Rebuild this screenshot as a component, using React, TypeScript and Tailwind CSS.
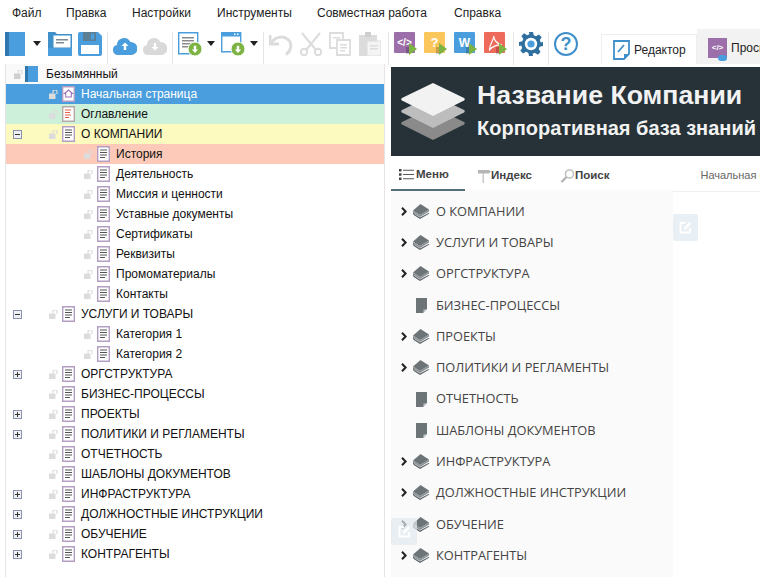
import type { ReactNode } from 'react'

const MENU: { label: string; width: string }[] = [
  { label: 'Файл', width: 'w-[54px]' },
  { label: 'Правка', width: 'w-[66px]' },
  { label: 'Настройки', width: 'w-[85px]' },
  { label: 'Инструменты', width: 'w-[100px]' },
  { label: 'Совместная работа', width: 'w-[137px]' },
  { label: 'Справка', width: 'w-[60px]' },
]

type TreeRow = {
  label: string
  level: 0 | 1 | 2
  toggle?: 'plus' | 'minus'
  icon?: 'book' | 'home' | 'toc' | 'doc'
  bg?: string
}

const TREE: TreeRow[] = [
  { label: 'Безымянный', level: 0, icon: 'book', bg: 'bg-[#f9f9f9]' },
  { label: 'Начальная страница', level: 1, icon: 'home', bg: 'bg-[#4a9edd] text-white' },
  { label: 'Оглавление', level: 1, icon: 'toc', bg: 'bg-[#cdf0da]' },
  { label: 'О КОМПАНИИ', level: 1, toggle: 'minus', bg: 'bg-[#fdfabf]' },
  { label: 'История', level: 2, bg: 'bg-[#fdc9b8]' },
  { label: 'Деятельность', level: 2 },
  { label: 'Миссия и ценности', level: 2 },
  { label: 'Уставные документы', level: 2 },
  { label: 'Сертификаты', level: 2 },
  { label: 'Реквизиты', level: 2 },
  { label: 'Промоматериалы', level: 2 },
  { label: 'Контакты', level: 2 },
  { label: 'УСЛУГИ И ТОВАРЫ', level: 1, toggle: 'minus' },
  { label: 'Категория 1', level: 2 },
  { label: 'Категория 2', level: 2 },
  { label: 'ОРГСТРУКТУРА', level: 1, toggle: 'plus' },
  { label: 'БИЗНЕС-ПРОЦЕССЫ', level: 1 },
  { label: 'ПРОЕКТЫ', level: 1, toggle: 'plus' },
  { label: 'ПОЛИТИКИ И РЕГЛАМЕНТЫ', level: 1, toggle: 'plus' },
  { label: 'ОТЧЕТНОСТЬ', level: 1 },
  { label: 'ШАБЛОНЫ ДОКУМЕНТОВ', level: 1 },
  { label: 'ИНФРАСТРУКТУРА', level: 1, toggle: 'plus' },
  { label: 'ДОЛЖНОСТНЫЕ ИНСТРУКЦИИ', level: 1, toggle: 'plus' },
  { label: 'ОБУЧЕНИЕ', level: 1, toggle: 'plus' },
  { label: 'КОНТРАГЕНТЫ', level: 1, toggle: 'plus' },
]

const SIDE_MENU: { label: string; folder: boolean }[] = [
  { label: 'О КОМПАНИИ', folder: true },
  { label: 'УСЛУГИ И ТОВАРЫ', folder: true },
  { label: 'ОРГСТРУКТУРА', folder: true },
  { label: 'БИЗНЕС-ПРОЦЕССЫ', folder: false },
  { label: 'ПРОЕКТЫ', folder: true },
  { label: 'ПОЛИТИКИ И РЕГЛАМЕНТЫ', folder: true },
  { label: 'ОТЧЕТНОСТЬ', folder: false },
  { label: 'ШАБЛОНЫ ДОКУМЕНТОВ', folder: false },
  { label: 'ИНФРАСТРУКТУРА', folder: true },
  { label: 'ДОЛЖНОСТНЫЕ ИНСТРУКЦИИ', folder: true },
  { label: 'ОБУЧЕНИЕ', folder: true },
  { label: 'КОНТРАГЕНТЫ', folder: true },
]

function Caret({ className = '' }: { className?: string }) {
  return (
    <svg width="8" height="5" viewBox="0 0 8 5" className={`shrink-0 ${className}`}>
      <path d="M0 0h8L4 5z" fill="#222" />
    </svg>
  )
}

function Sep({ className = '' }: { className?: string }) {
  return <div className={`h-[33px] w-px shrink-0 bg-[#e6e6e6] ${className}`} />
}

function BookIcon() {
  return (
    <svg width="20" height="24" viewBox="0 0 20 24" className="shrink-0">
      <rect width="20" height="24" fill="#4a9edd" />
      <rect width="4" height="24" fill="#2f78ad" />
    </svg>
  )
}

function FolderOpenIcon() {
  return (
    <svg width="24" height="24" viewBox="0 0 24 24" className="shrink-0">
      <path d="M0 0h7l2 2h15v22H0z" fill="#3f8fca" />
      <rect x="5" y="3" width="18" height="13" fill="#fff" stroke="#3f8fca" />
      <path d="M8 7h12v1.4H8zM8 10h8v1.4H8z" fill="#7d8a94" />
      <path d="M0 16h24v8H0z" fill="#4a9edd" />
    </svg>
  )
}

function SaveIcon() {
  return (
    <svg width="24" height="24" viewBox="0 0 24 24" className="shrink-0">
      <path d="M2 0h18l4 4v18a2 2 0 0 1-2 2H2a2 2 0 0 1-2-2V2a2 2 0 0 1 2-2z" fill="#4a9edd" />
      <rect x="5" y="0" width="13" height="9" fill="#5d7f96" />
      <rect x="13" y="1.5" width="3" height="6" fill="#4a9edd" />
      <rect x="3" y="13" width="18" height="9" fill="#fff" />
    </svg>
  )
}

function CloudIcon({ color, arrow }: { color: string; arrow: 'up' | 'down' }) {
  return (
    <svg width="24" height="19" viewBox="0 0 24 19" className="mt-[4px] shrink-0">
      <path d="M5 19a5 5 0 0 1-1-9.9A7 7 0 0 1 17.3 6 6.5 6.5 0 0 1 18.5 19z" fill={color} />
      {arrow === 'up' ? (
        <path d="M12 6.5l3.5 3.6h-2.3V14h-2.4v-3.9H8.5z" fill="#fff" />
      ) : (
        <path d="M12 14.5l3.5-3.6h-2.3V7h-2.4v3.9H8.5z" fill="#fff" />
      )}
    </svg>
  )
}

function GreenBadge({ x, y }: { x: number; y: number }) {
  return (
    <g transform={`translate(${x} ${y})`}>
      <circle cx="7" cy="7" r="7" fill="#7cb342" stroke="#fff" strokeWidth="1" />
      <path d="M7 11l3.2-3.4H8.2V3.8H5.8v3.8H3.8z" fill="#fff" />
    </g>
  )
}

function DocDownIcon() {
  return (
    <svg width="29" height="25" viewBox="0 0 29 25" className="shrink-0">
      <path d="M.7.7h19v21H.7z" fill="#fff" stroke="#4a9edd" strokeWidth="1.4" />
      <path d="M4 5h12v1.5H4zM4 8h12v1.5H4zM4 11h9v1.5H4zM4 14h7v1.5H4z" fill="#8a8a8a" />
      <GreenBadge x={10} y={10} />
    </svg>
  )
}

function WindowDownIcon() {
  return (
    <svg width="29" height="25" viewBox="0 0 29 25" className="shrink-0">
      <path d="M.7.7h19v19H.7z" fill="#fff" stroke="#4a9edd" strokeWidth="1.4" />
      <rect y="0" width="20" height="4.5" fill="#4a9edd" />
      <path d="M13 1.5h1.5V3H13zM16 1.5h1.5V3H16z" fill="#fff" />
      <GreenBadge x={10} y={10} />
    </svg>
  )
}

function UndoIcon() {
  return (
    <svg width="24" height="22" viewBox="0 0 24 22" className="mt-[2px] shrink-0">
      <path d="M1 1v9h9" fill="none" stroke="#dcdcdc" strokeWidth="3" />
      <path d="M2 9.5C5 3 14 1 19 5.5c4.5 4 3.5 11-2 15" fill="none" stroke="#dcdcdc" strokeWidth="3" />
    </svg>
  )
}

function CutIcon() {
  return (
    <svg width="24" height="24" viewBox="0 0 24 24" className="shrink-0">
      <g fill="none" stroke="#dcdcdc" strokeWidth="2">
        <path d="M3 1l14 17M21 1L7 18" />
        <circle cx="5" cy="20" r="3.2" />
        <circle cx="19" cy="20" r="3.2" />
      </g>
    </svg>
  )
}

function CopyIcon() {
  return (
    <svg width="22" height="24" viewBox="0 0 22 24" className="shrink-0">
      <g fill="#fff" stroke="#dcdcdc" strokeWidth="1.8">
        <path d="M1 1h13v15H1z" />
        <path d="M8 8h13v15H8z" />
      </g>
      <path d="M11 12h7v1.5h-7zM11 15h7v1.5h-7zM11 18h5v1.5h-5zM4 5h7v1.5H4z" fill="#dcdcdc" />
    </svg>
  )
}

function PasteIcon() {
  return (
    <svg width="22" height="24" viewBox="0 0 22 24" className="shrink-0">
      <path d="M0 3h18v21H0z" fill="#dcdcdc" />
      <path d="M6 0h6v5H6z" fill="#cfcfcf" />
      <path d="M8 9h14v15H8z" fill="#f4f4f4" stroke="#dcdcdc" />
      <path d="M11 13h8v1.5h-8zM11 16h8v1.5h-8z" fill="#dcdcdc" />
    </svg>
  )
}

function ExportIcon({ color, children }: { color: string; children: ReactNode }) {
  return (
    <div className="relative h-[24px] w-[23px] shrink-0">
      <div className={`flex h-[21px] w-[21px] items-center justify-center rounded-[1px] ${color}`}>
        {children}
      </div>
      <svg width="11" height="14" viewBox="0 0 11 14" className="absolute bottom-0 right-0">
        <rect x="0" y="5" width="4" height="7" fill="#00000033" />
        <path d="M3 1l8 6-8 6z" fill="#7cb342" />
      </svg>
    </div>
  )
}

function GearIcon() {
  return (
    <svg width="24" height="24" viewBox="0 0 24 24" className="shrink-0">
      <path
        d="M10 0h4l.7 3.3 2.3 1 2.9-1.900 2.8 2.800-1.900 2.900 1 2.300L24 10v4l-3.300.7-1 2.300 1.900 2.900-2.800 2.800-2.900-1.900-2.300 1L14 24h-4l-.7-3.300-2.300-1-2.900 1.900-2.800-2.800 1.900-2.900-1-2.300L0 14v-4l3.300-.7 1-2.300-1.900-2.900 2.800-2.800 2.900 1.900 2.300-1z"
        fill="#2f6f9f"
      />
      <circle cx="12" cy="12" r="6.2" fill="#fff" />
      <circle cx="12" cy="12" r="3.6" fill="#4a9edd" />
    </svg>
  )
}

function HelpIcon() {
  return (
    <div className="flex h-[24px] w-[24px] shrink-0 items-center justify-center rounded-full border-2 border-[#3f8fca] text-[18px] font-bold leading-none text-[#3f8fca]">
      ?
    </div>
  )
}

function Lock({ root = false }: { root?: boolean }) {
  return (
    <svg width="10" height="9" viewBox="0 0 10 9" className="shrink-0">
      <rect x="0" y="3.5" width="6.5" height="5.5" fill={root ? '#cfcfcf' : '#dcdcdc'} />
      <path d="M4 3.5V2a2 2 0 0 1 4-.4V4" fill="none" stroke="#dcdcdc" strokeWidth="1.2" />
    </svg>
  )
}

function TreeIcon({ icon = 'doc' }: { icon?: TreeRow['icon'] }) {
  if (icon === 'book') {
    return (
      <svg width="13" height="16" viewBox="0 0 13 16" className="shrink-0">
        <rect width="13" height="16" fill="#4a9edd" />
        <rect width="3" height="16" fill="#2f78ad" />
      </svg>
    )
  }
  return (
    <svg width="13" height="16" viewBox="0 0 13 16" className="shrink-0">
      <path d="M.7.7h11.6v14.6H.7z" fill="#fff" stroke={icon === 'toc' ? '#b8a9a9' : '#b39fc4'} strokeWidth="1.4" />
      {icon === 'home' && <path d="M6.5 4l4 3.5H9.3V11H3.7V7.5H2.5z" fill="none" stroke="#a070b8" strokeWidth="1.1" />}
      {icon === 'toc' && <path d="M3 3.5h6v1H3zM3 6h5v1H3zM3 8.5h6v1H3zM3 11h4v1H3z" fill="#e8604c" />}
      {icon === 'doc' && <path d="M3 3.5h7v1H3zM3 6h7v1H3zM3 8.5h7v1H3zM3 11h5v1H3z" fill="#555" />}
    </svg>
  )
}

function Toggle({ kind }: { kind: 'plus' | 'minus' }) {
  return (
    <svg width="9" height="9" viewBox="0 0 9 9" className="shrink-0">
      <rect x=".5" y=".5" width="8" height="8" fill="#eef0f6" stroke="#8a93ad" />
      <path d="M2 4h5v1H2z" fill="#333" />
      {kind === 'plus' && <path d="M4 2h1v5H4z" fill="#333" />}
    </svg>
  )
}

function Row({ row }: { row: TreeRow }) {
  const indent = row.level === 0 ? 'pl-[8px]' : row.level === 1 ? 'pl-[43px]' : 'pl-[78px]'
  return (
    <div className={`relative flex h-5 items-center ${indent} ${row.bg ?? ''}`}>
      {row.toggle && (
        <div className="absolute left-[7px] top-[6px] flex">
          <Toggle kind={row.toggle} />
        </div>
      )}
      <Lock root={row.level === 0} />
      <div className={row.level === 0 ? 'ml-[1px]' : 'ml-[3px]'}>
        <TreeIcon icon={row.icon} />
      </div>
      <span className={row.level === 0 ? 'ml-[8px]' : 'ml-[6px]'}>{row.label}</span>
    </div>
  )
}

function StackLogo() {
  return (
    <svg width="64" height="58" viewBox="0 0 64 58" className="shrink-0">
      <path d="M32 24l31 15a1.5 1.5 0 0 1 0 2.6L32 57 1 41.6A1.5 1.5 0 0 1 1 39z" fill="#8a8a8a" />
      <path d="M32 12l31 15a1.5 1.5 0 0 1 0 2.6L32 45 1 29.6A1.5 1.5 0 0 1 1 27z" fill="#bdbdbd" />
      <path d="M32 0l31 15a1.5 1.5 0 0 1 0 2.6L32 33 1 17.6A1.5 1.5 0 0 1 1 15z" fill="#f2f2f2" />
    </svg>
  )
}

function SideBook() {
  return (
    <svg width="17" height="15" viewBox="0 0 17 15" className="shrink-0">
      <path d="M7.5 0L16 5.5 7 11 0 6.5z" fill="#6d7478" />
      <path d="M0 6.5L7 11l9-5.500v2L7 13 1.500 9.500z" fill="#8b9194" />
      <path d="M0 6.5c-.5 2 0 4 1.500 5L7 15l9.500-5.500-1-.6L7 13.500 2 10.200C1 9.500.6 8 0 6.500z" fill="#5f666a" />
    </svg>
  )
}

function SidePage() {
  return (
    <svg width="11" height="15" viewBox="0 0 11 15" className="shrink-0">
      <path d="M0 0h11v11l-4 4H0z" fill="#6d7478" />
      <path d="M11 11.5L7.5 15v-3.5z" fill="#c4c8ca" />
    </svg>
  )
}

function EditIcon() {
  return (
    <svg width="13" height="13" viewBox="0 0 13 13">
      <path d="M6 2H1.5v9.5H11V7" fill="none" stroke="#fff" strokeWidth="1.8" />
      <path d="M5 8.5V6.5L10.5 1l1.8 1.8L6.8 8.5z" fill="#fff" />
    </svg>
  )
}

function ListIcon() {
  return (
    <svg width="15" height="11" viewBox="0 0 15 11" className="shrink-0">
      <path d="M0 0h2.500v2.500H0zM0 4.200h2.500v2.500H0zM0 8.500h2.500V11H0z" fill="#444" />
      <path d="M4 .7h11v1H4zM4 5h11v1H4zM4 9.300h11v1H4z" fill="#555" />
    </svg>
  )
}

function SignIcon() {
  return (
    <svg width="15" height="14" viewBox="0 0 15 14" className="shrink-0">
      <path d="M2 1h11l2 1.800L13 4.500H2z" fill="#b5b5b5" />
      <rect x="6.5" y="4" width="1.5" height="10" fill="#c8c8c8" />
    </svg>
  )
}

function SearchIcon() {
  return (
    <svg width="15" height="14" viewBox="0 0 15 14" className="shrink-0">
      <circle cx="9.5" cy="5" r="4" fill="none" stroke="#c2c2c2" strokeWidth="1.6" />
      <path d="M6.5 8L1.5 13" stroke="#b0b0b0" strokeWidth="2.2" />
    </svg>
  )
}

export default function App() {
  return (
    <div className="flex h-[577px] w-[760px] flex-col overflow-hidden bg-white font-['Liberation_Sans',sans-serif] text-[12px] text-[#111]">
      {/* Menu */}
      <div className="flex h-[26px] items-center pl-[12px] text-[#222]">
        {MENU.map((m) => (
          <span key={m.label} className={m.width}>
            {m.label}
          </span>
        ))}
      </div>

      {/* Toolbar */}
      <div className="flex h-[38px] items-start pl-[5px] pt-[6px]">
        <BookIcon />
        <Caret className="ml-[8px] mt-[9px]" />
        <div className="ml-[7px]">
          <FolderOpenIcon />
        </div>
        <div className="ml-[6px]">
          <SaveIcon />
        </div>
        <Sep className="ml-[5px]" />
        <div className="ml-[5px]">
          <CloudIcon color="#4a9edd" arrow="up" />
        </div>
        <div className="ml-[6px]">
          <CloudIcon color="#d9d9d9" arrow="down" />
        </div>
        <Sep className="ml-[5px]" />
        <div className="ml-[5px]">
          <DocDownIcon />
        </div>
        <Caret className="mt-[9px]" />
        <div className="ml-[6px]">
          <WindowDownIcon />
        </div>
        <Caret className="mt-[9px]" />
        <Sep className="ml-[5px]" />
        <div className="ml-[5px]">
          <UndoIcon />
        </div>
        <div className="ml-[6px]">
          <CutIcon />
        </div>
        <div className="ml-[6px]">
          <CopyIcon />
        </div>
        <div className="ml-[8px]">
          <PasteIcon />
        </div>
        <Sep className="ml-[7px]" />
        <div className="ml-[5px]">
          <ExportIcon color="bg-[#9c6eaa]">
            <span className="text-[10px] font-bold text-white">{'</>'}</span>
          </ExportIcon>
        </div>
        <div className="ml-[7px]">
          <ExportIcon color="bg-[#fbc65c]">
            <span className="text-[13px] font-bold text-white">?</span>
          </ExportIcon>
        </div>
        <div className="ml-[7px]">
          <ExportIcon color="bg-[#4a9edd]">
            <span className="text-[12px] font-bold text-white">W</span>
          </ExportIcon>
        </div>
        <div className="ml-[7px]">
          <ExportIcon color="bg-[#ee6a5a]">
            <svg width="16" height="16" viewBox="0 0 16 16">
              <path
                d="M7 1c-1 3 3 8 8 9-4-.5-10 1-12.5 5C2 11 6 6 7 1z"
                fill="none"
                stroke="#fff"
                strokeWidth="1.2"
              />
            </svg>
          </ExportIcon>
        </div>
        <Sep className="ml-[6px]" />
        <div className="ml-[5px]">
          <GearIcon />
        </div>
        <Sep className="ml-[5px]" />
        <div className="ml-[5px]">
          <HelpIcon />
        </div>

        {/* View tabs */}
        <div className="ml-[23px] flex h-[30px] w-[96px] shrink-0 items-center self-end border border-b-0 border-[#eeeeee] bg-white pl-[11px] text-[#222]">
          <svg width="17" height="20" viewBox="0 0 17 20" className="shrink-0">
            <path d="M1 1h15v13l-5 5H1z" fill="#fff" stroke="#3f8fca" strokeWidth="1.8" />
            <path d="M5 12l6-7" stroke="#3f8fca" strokeWidth="1.8" />
            <path d="M16 14l-5 5v-5z" fill="#3f8fca" />
          </svg>
          <span className="ml-[4px]">Редактор</span>
        </div>
        <div className="flex h-[35px] min-w-0 flex-1 items-center self-end overflow-hidden bg-[#f2f2f2] pl-[11px] pt-[2px] text-[#222]">
          <div className="relative flex h-[20px] w-[19px] shrink-0 items-center justify-center bg-[#9c6eaa] text-[8px] font-bold text-white">
            {'</>'}
            <span className="absolute -bottom-[3px] right-0 h-[6px] w-[9px] rounded-full bg-[#4a9edd]" />
          </div>
          <span className="ml-[4px] whitespace-nowrap">Просмотр</span>
        </div>
      </div>

      {/* Panels */}
      <div className="flex min-h-0 flex-1">
        <div className="ml-[5px] w-[380px] shrink-0 border-x border-[#e4e4e4]">
          {TREE.map((r) => (
            <Row key={r.label} row={r} />
          ))}
        </div>

        <div className="relative ml-[6px] mt-[3px] flex min-w-0 flex-1 flex-col">
          {/* Banner */}
          <div className="flex h-[89px] shrink-0 items-center bg-[#263238] pl-[10px]">
            <StackLogo />
            <div className="mb-[4px] ml-[12px] whitespace-nowrap font-bold text-[#f2f2f2]">
              <div className="text-[26.7px] leading-[30px]">Название Компании</div>
              <div className="mt-[6px] text-[20px] leading-[24px]">Корпоративная база знаний</div>
            </div>
          </div>

          {/* Tabs */}
          <div className="relative flex h-[35px] shrink-0 items-center overflow-hidden pt-[2px] text-[11.5px] font-bold text-[#444]">
            <div className="-mt-[2px] flex h-[35px] w-[74px] shrink-0 items-center gap-[2px] border-b-2 border-[#546e7a] pl-[8px] pt-[4px]">
              <ListIcon />
              <span>Меню</span>
            </div>
            <div className="ml-[11px] mt-[2px] flex shrink-0 items-center gap-0">
              <SignIcon />
              <span>Индекс</span>
            </div>
            <div className="ml-[28px] mt-[2px] flex shrink-0 items-center gap-0">
              <SearchIcon />
              <span>Поиск</span>
            </div>
            <span className="ml-[91px] mt-[2px] shrink-0 whitespace-nowrap text-[11px] font-normal text-[#666]">
              Начальная страница
            </span>
          </div>

          {/* Body */}
          <div className="flex min-h-0 flex-1">
            <div className="w-[282px] shrink-0 bg-[#fafafa] pt-[4.6px] font-['Open_Sans',sans-serif] text-[12.8px] text-[#444] shadow-[1px_0_2px_rgba(0,0,0,0.08)]">
              {SIDE_MENU.map((item) => (
                <div key={item.label} className="flex h-[31.3px] items-center pl-[10px]">
                  <div className="w-[12px] shrink-0">
                    {item.folder && (
                      <svg width="6" height="9" viewBox="0 0 6 9">
                        <path d="M1 .8l3.6 3.7L1 8.2" fill="none" stroke="#222" strokeWidth="2" />
                      </svg>
                    )}
                  </div>
                  <div className="flex w-[23px] shrink-0 items-center">
                    {item.folder ? (
                      <SideBook />
                    ) : (
                      <span className="pl-[3px]">
                        <SidePage />
                      </span>
                    )}
                  </div>
                  <span className="whitespace-nowrap">{item.label}</span>
                </div>
              ))}
            </div>
            <div className="flex-1 border-t border-[#f0f0f0] bg-white pt-[22px]">
              <div className="flex h-[27px] w-[25px] items-center justify-center rounded-[2px] bg-[#e8f0f5]">
                <EditIcon />
              </div>
            </div>
          </div>

          {/* Edit button lying over the menu */}
          <div className="absolute left-0 top-[451px] flex h-[27px] w-[26px] items-center justify-center rounded-[2px] bg-[#dfe8ee]/70">
            <EditIcon />
          </div>
        </div>
      </div>
    </div>
  )
}
